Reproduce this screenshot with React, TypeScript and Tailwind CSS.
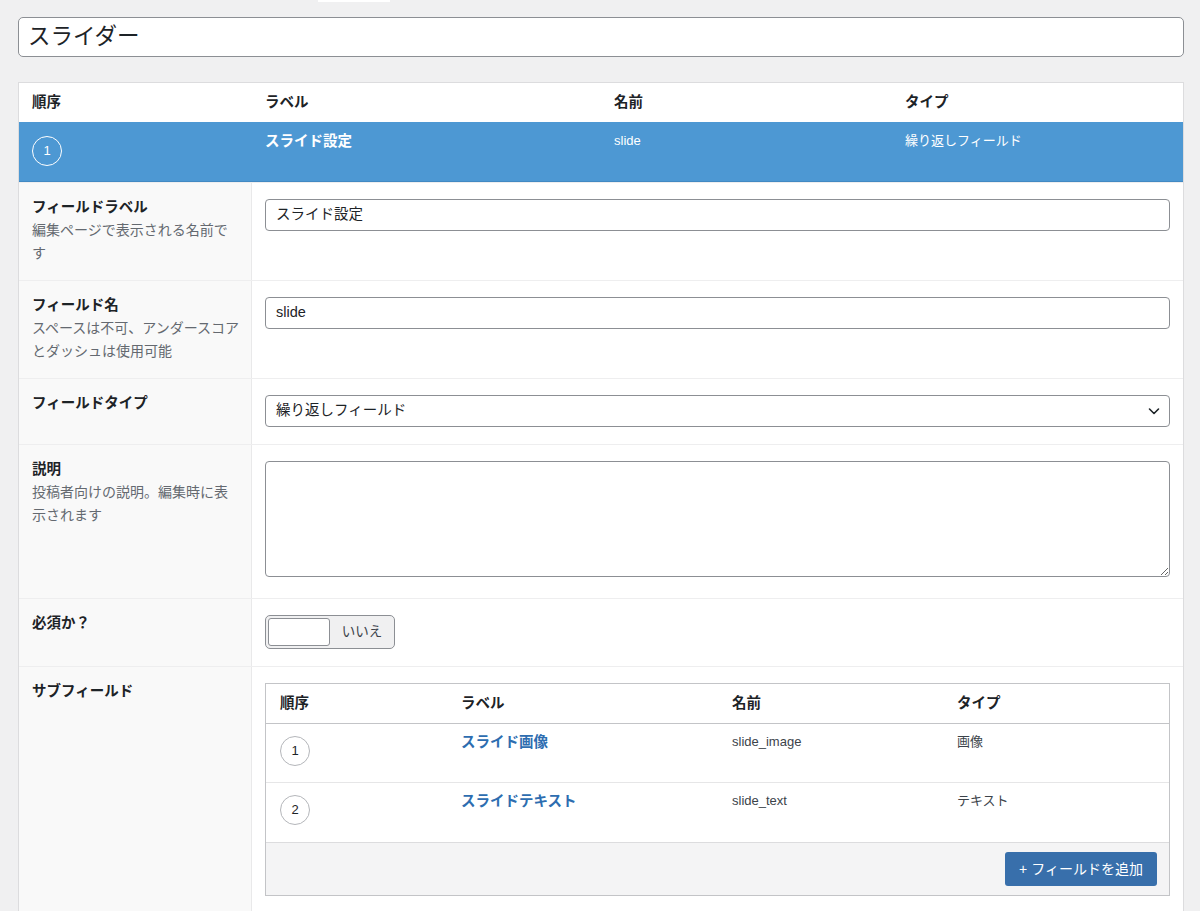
import React from "react";

const font = { fontFamily: '"Liberation Sans", "Noto Sans CJK JP", sans-serif' };

function Circle({ n, light }: { n: number; light?: boolean }) {
  return (
    <div
      className={
        light
          ? "flex h-[30px] w-[30px] items-center justify-center rounded-full border border-white text-[13px] text-white"
          : "flex h-[30px] w-[30px] items-center justify-center rounded-full border border-[#b4b6ba] text-[13px] text-[#1d2327]"
      }
    >
      {n}
    </div>
  );
}

function Row({
  label,
  desc,
  children,
}: {
  label: string;
  desc?: string[];
  children: React.ReactNode;
}) {
  return (
    <div className="flex border-t border-[#eeeeef]">
      <div className="w-[233px] shrink-0 border-r border-[#e9e9ea] bg-[#f9f9f9] pl-[13px] pr-[12px] pt-[13px] pb-[15px]">
        <div className="text-[14.5px] font-bold leading-[23px] text-[#1d2327]">{label}</div>
        {desc && (
          <div className="text-[14px] leading-[23px] text-[#646970]">
            {desc.map((d, i) => (
              <div key={i} className="whitespace-nowrap">
                {d}
              </div>
            ))}
          </div>
        )}
      </div>
      <div className="flex-1 pl-[13px] pr-[13px] pt-[16px] pb-[17px]">{children}</div>
    </div>
  );
}

export default function App() {
  return (
    <div style={font} className="min-h-[911px] w-full bg-[#f0f0f1] pl-[18px] pr-[16px] text-[#1d2327]">
      <div className="ml-[300px] h-[2px] w-[72px] bg-white" />
      <div className="mt-[15px] flex h-[40px] items-center rounded-[5px] border border-[#8c8f94] bg-white pl-[9px] pr-[10px] text-[22.5px] text-[#1d2327]">
        スライダー
      </div>

      <div className="mt-[25px] border border-[#dcdcde] bg-white">
        {/* header */}
        <div className="flex h-[39px] items-center text-[14.5px] font-bold text-[#1d2327]">
          <div className="w-[233px] shrink-0 pl-[13px]">順序</div>
          <div className="w-[349px] shrink-0 pl-[13px]">ラベル</div>
          <div className="w-[291px] shrink-0 pl-[13px]">名前</div>
          <div className="flex-1 pl-[13px]">タイプ</div>
        </div>
        {/* active row */}
        <div className="flex h-[60px] items-start border-b border-[#4289c3] bg-[#4d98d3] text-white">
          <div className="w-[233px] shrink-0 pl-[13px] pt-[14px]">
            <Circle n={1} light />
          </div>
          <div className="w-[349px] shrink-0 pl-[13px] pt-[9px] text-[14.5px] font-bold leading-[20px]">スライド設定</div>
          <div className="w-[291px] shrink-0 pl-[13px] pt-[9px] text-[13px] leading-[20px]">slide</div>
          <div className="flex-1 pl-[13px] pt-[9px] text-[13px] leading-[20px]">繰り返しフィールド</div>
        </div>

        <Row label="フィールドラベル" desc={["編集ページで表示される名前で", "す"]}>
          <div className="flex h-[32px] items-center rounded-[4px] border border-[#8c8f94] bg-white px-[10px] text-[14.5px]">
            スライド設定
          </div>
        </Row>
        <Row label="フィールド名" desc={["スペースは不可、アンダースコア", "とダッシュは使用可能"]}>
          <div className="flex h-[32px] items-center rounded-[4px] border border-[#8c8f94] bg-white px-[10px] text-[14.5px]">
            slide
          </div>
        </Row>
        <Row label="フィールドタイプ">
          <div className="flex h-[32px] items-center justify-between rounded-[4px] border border-[#8c8f94] bg-white pl-[10px] pr-[8px] text-[14.5px]">
            <span>繰り返しフィールド</span>
            <svg width="14" height="14" viewBox="0 0 14 14" fill="none">
              <path d="M2.5 5 L7 9.5 L11.5 5" stroke="#1d2327" strokeWidth="1.6" strokeLinecap="round" strokeLinejoin="round" />
            </svg>
          </div>
        </Row>
        <Row label="説明" desc={["投稿者向けの説明。編集時に表", "示されます"]}>
          <div className="pb-[4px]">
            <textarea className="block h-[116px] w-full resize-y rounded-[4px] border border-[#8c8f94] bg-white" />
          </div>
        </Row>
        <Row label="必須か？">
          <div className="flex h-[34px] w-[130px] items-center rounded-[5px] border border-[#8c8f94] bg-[#f0f0f1] pl-[2px]">
            <div className="h-[28px] w-[62px] rounded-[3px] border border-[#8c8f94] bg-white" />
            <div className="flex-1 text-center text-[13.5px] text-[#3c434a]">いいえ</div>
          </div>
        </Row>
        <Row label="サブフィールド">
          <div className="border border-[#c3c4c7] bg-white">
            <div className="flex h-[40px] items-center border-b border-[#c3c4c7] text-[14.5px] font-bold">
              <div className="w-[181px] shrink-0 pl-[14px]">順序</div>
              <div className="w-[271px] shrink-0 pl-[14px]">ラベル</div>
              <div className="w-[225px] shrink-0 pl-[14px]">名前</div>
              <div className="flex-1 pl-[14px]">タイプ</div>
            </div>
            {[
              { n: 1, label: "スライド画像", name: "slide_image", type: "画像" },
              { n: 2, label: "スライドテキスト", name: "slide_text", type: "テキスト" },
            ].map((r, i) => (
              <div key={r.n} className={i === 0 ? "flex h-[59px] items-start border-b border-[#e6e6e7]" : "flex h-[59px] items-start"}>
                <div className="w-[181px] shrink-0 pl-[14px] pt-[12px]">
                  <Circle n={r.n} />
                </div>
                <div className="w-[271px] shrink-0 pl-[14px] pt-[8px] text-[14.5px] font-bold leading-[20px] text-[#2d6db0]">
                  {r.label}
                </div>
                <div className="w-[225px] shrink-0 pl-[14px] pt-[8px] text-[13px] leading-[20px] text-[#3c434a]">{r.name}</div>
                <div className="flex-1 pl-[14px] pt-[8px] text-[13px] leading-[20px] text-[#3c434a]">{r.type}</div>
              </div>
            ))}
            <div className="flex h-[53px] items-center justify-end border-t border-[#dcdcde] bg-[#f4f4f5] pr-[12px]">
              <div className="flex h-[34px] w-[152px] items-center justify-center rounded-[3px] bg-[#386fab] text-[14px] text-white">
                + フィールドを追加
              </div>
            </div>
          </div>
        </Row>
      </div>
    </div>
  );
}
